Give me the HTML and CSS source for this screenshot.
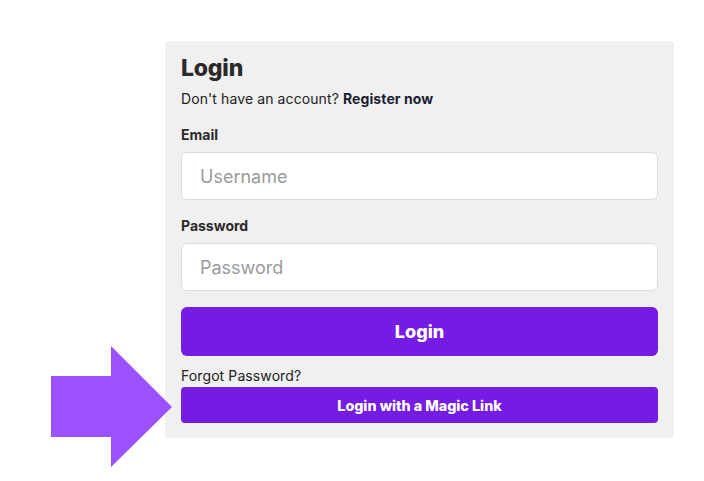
FILE: index.html
```html
<!DOCTYPE html>
<html lang="en">
<head>
<meta charset="utf-8">
<title>Login</title>
<link rel="stylesheet" href="styles.css">
</head>
<body>
<div class="page">
  <div class="card">
    <h1 class="title">Login</h1>
    <p class="sub">Don't have an account? <a class="reg" href="#">Register now</a></p>
    <label class="label">Email</label>
    <div class="input"><span class="ph">Username</span></div>
    <label class="label">Password</label>
    <div class="input"><span class="ph">Password</span></div>
    <div class="btn-login">Login</div>
    <div class="forgot">Forgot Password?</div>
    <div class="btn-magic">Login with a Magic Link</div>
  </div>
  <svg class="arrow" width="704" height="481" viewBox="0 0 704 481">
    <polygon points="51,376 111,376 111,346 172,407 111,467 111,437 51,437" fill="#9b51fe"/>
  </svg>
</div>
</body>
</html>
```
FILE: styles.css
```css
html, body {
  margin: 0;
  padding: 0;
  background: #ffffff;
}
body {
  font-family: Inter, "Liberation Sans", sans-serif;
  color: #2a2a2a;
}
.page {
  position: relative;
  width: 704px;
  height: 481px;
  overflow: hidden;
  padding-top: 41px;
  box-sizing: border-box;
}
.card {
  margin-left: 165px;
  width: 509px;
  box-sizing: border-box;
  background: #f0f0f0;
  border-radius: 4px;
  padding: 12px 16px 15px 16px;
}
.title {
  margin: 0;
  font-size: 23px;
  line-height: 30px;
  font-weight: 800;
  color: #2b2929;
  letter-spacing: -0.2px;
}
.sub {
  margin: 6px 0 0 0;
  font-size: 14px;
  line-height: 20px;
  color: #222;
  letter-spacing: 0.1px;
}
.reg {
  color: #1b1d33;
  font-weight: 700;
  text-decoration: none;
}
.label {
  display: block;
  margin-top: 16px;
  font-size: 14px;
  line-height: 20px;
  font-weight: 700;
  color: #2b2929;
}
.input {
  margin-top: 7px;
  height: 48px;
  box-sizing: border-box;
  background: #fff;
  border: 1px solid #dcdcdc;
  border-radius: 6px;
  display: flex;
  align-items: center;
  padding-left: 18px;
}
.ph {
  font-size: 18px;
  color: #9a9a9a;
}
.btn-login {
  margin-top: 16px;
  height: 49px;
  background: #741be4;
  border-radius: 6px;
  color: #fff;
  font-size: 18px;
  font-weight: 800;
  display: flex;
  align-items: center;
  justify-content: center;
}
.forgot {
  margin-top: 10px;
  font-size: 14px;
  line-height: 20px;
  color: #222;
  letter-spacing: 0.1px;
}
.btn-magic {
  margin-top: 1px;
  height: 36px;
  background: #741be4;
  border-radius: 4px;
  color: #fff;
  font-size: 14.3px;
  font-weight: 800;
  display: flex;
  align-items: center;
  justify-content: center;
}
.arrow {
  position: absolute;
  left: 0;
  top: 0;
}
```
